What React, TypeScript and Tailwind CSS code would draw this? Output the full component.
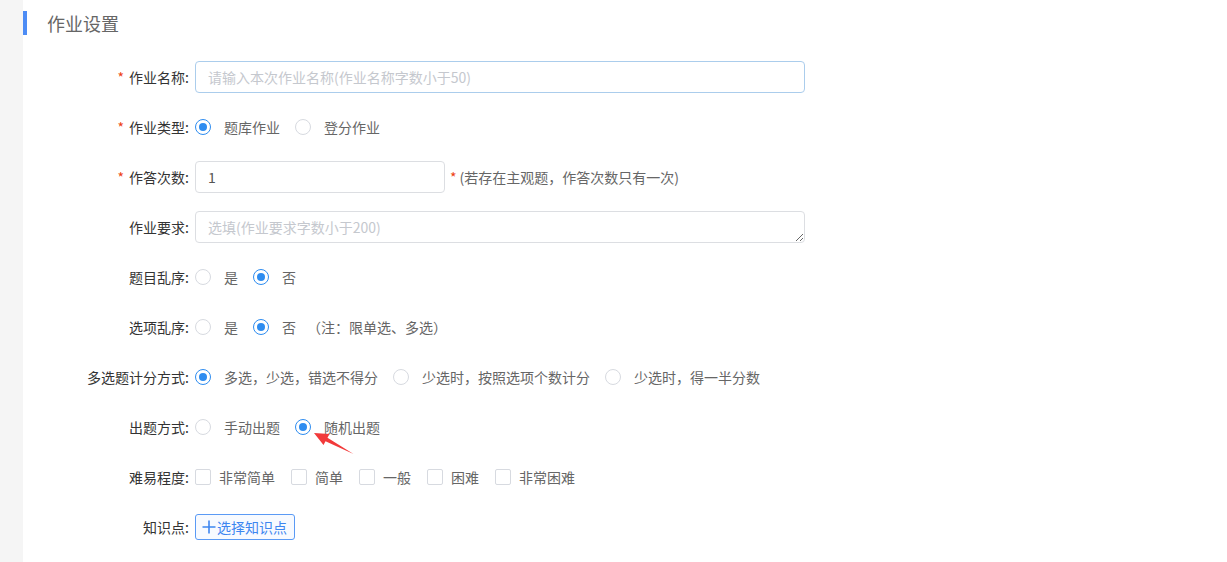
import React from "react";

const Radio = ({ checked }: { checked?: boolean }) => (
  <span
    className={
      "flex h-4 w-4 flex-none items-center justify-center rounded-full border bg-white " +
      (checked ? "border-[#2d8cf0]" : "border-[#d7dae0]")
    }
  >
    {checked && <span className="h-[8px] w-[8px] rounded-full bg-[#2d8cf0]" />}
  </span>
);

const RadioGroup = ({ options, value }: { options: string[]; value: number }) => (
  <div className="flex items-center gap-[15px]">
    {options.map((o, i) => (
      <label key={o} className="flex items-center">
        <Radio checked={i === value} />
        <span className="ml-[13px] text-[#666]">{o}</span>
      </label>
    ))}
  </div>
);

const Row = ({ label, required, children }: { label: string; required?: boolean; children: React.ReactNode }) => (
  <div className="flex h-[50px] items-center">
    <div className="w-[172px] flex-none pr-[6px] text-right text-[#333]">
      {required && <span className="mr-[5px] text-[#ed3f14]">*</span>}
      {label}:
    </div>
    <div className="flex items-center">{children}</div>
  </div>
);

export default function App() {
  const levels = ["非常简单", "简单", "一般", "困难", "非常困难"];

  return (
    <div className="relative flex min-h-screen bg-white font-['Microsoft_YaHei','Noto_Sans_CJK_SC',sans-serif] text-[14px] leading-[20px]">
      <div className="w-[23px] flex-none bg-[#f5f5f5]" />

      <div className="flex-1">
        <div className="mt-[11px] flex h-6 items-center">
          <div className="h-6 w-[4px] bg-[#4d8cf5]" />
          <h1 className="ml-[20px] text-[18px] font-normal text-[#666]">作业设置</h1>
        </div>

        <div className="mt-[17px]">
          <Row label="作业名称" required>
            <input
              className="h-8 w-[610px] rounded-[4px] border border-[#abcdec] px-[12px] text-[#666] outline-none placeholder:text-[#c5c8ce]"
              placeholder="请输入本次作业名称(作业名称字数小于50)"
            />
          </Row>

          <Row label="作业类型" required>
            <RadioGroup options={["题库作业", "登分作业"]} value={0} />
          </Row>

          <Row label="作答次数" required>
            <input
              className="h-8 w-[250px] rounded-[4px] border border-[#dcdee2] px-[12px] text-[#555] outline-none"
              defaultValue="1"
            />
            <span className="ml-[5px] text-[#666]">
              <span className="mr-[3px] text-[#ed3f14]">*</span>(若存在主观题，作答次数只有一次)
            </span>
          </Row>

          <Row label="作业要求">
            <textarea
              rows={1}
              className="block h-8 w-[610px] resize-y rounded-[4px] border border-[#dcdee2] px-[12px] py-[5px] text-[#666] outline-none placeholder:text-[#c5c8ce]"
              placeholder="选填(作业要求字数小于200)"
            />
          </Row>

          <Row label="题目乱序">
            <RadioGroup options={["是", "否"]} value={1} />
          </Row>

          <Row label="选项乱序">
            <RadioGroup options={["是", "否"]} value={1} />
            <span className="ml-[11px] text-[#666]">（注：限单选、多选）</span>
          </Row>

          <Row label="多选题计分方式">
            <RadioGroup
              options={["多选，少选，错选不得分", "少选时，按照选项个数计分", "少选时，得一半分数"]}
              value={0}
            />
          </Row>

          <Row label="出题方式">
            <RadioGroup options={["手动出题", "随机出题"]} value={1} />
          </Row>

          <Row label="难易程度">
            <div className="flex items-center gap-[16px]">
              {levels.map((l) => (
                <label key={l} className="flex items-center">
                  <span className="h-4 w-4 flex-none rounded-[2px] border border-[#d7dae0] bg-white" />
                  <span className="ml-[8px] text-[#666]">{l}</span>
                </label>
              ))}
            </div>
          </Row>

          <Row label="知识点">
            <button className="flex h-[26px] items-center rounded-[3px] border border-[#5a9af5] bg-[#f7faff] pl-[6px] pr-[7px] text-[#3d86f0]">
              <svg width="14" height="14" viewBox="0 0 14 14" className="mr-[1px]">
                <path d="M7 0.5V13.5M0.5 7H13.5" stroke="#3d86f0" strokeWidth="1.6" />
              </svg>
              选择知识点
            </button>
          </Row>
        </div>
      </div>

      {/* red annotation arrow */}
      <svg className="absolute left-[310px] top-[428px]" width="48" height="30" viewBox="0 0 48 30">
        <polygon points="4,5 19.5,6 17.5,9.8 43.5,26 15.5,13.2 13.5,17" fill="#f23a3a" />
      </svg>
    </div>
  );
}
